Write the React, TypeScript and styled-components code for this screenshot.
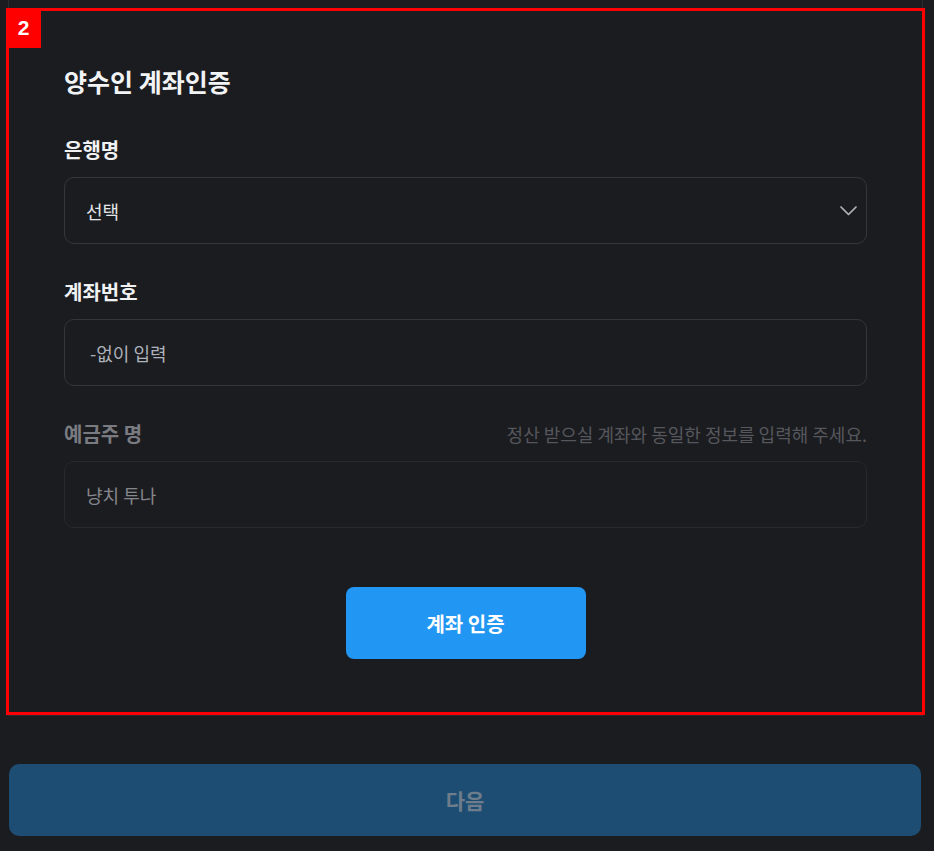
import React from "react";
import styled, { createGlobalStyle } from "styled-components";

const GlobalStyle = createGlobalStyle`
  html, body {
    margin: 0;
    padding: 0;
    background: #1b1c20;
  }
  body {
    font-family: "Noto Sans CJK KR", "Noto Sans", sans-serif;
    -webkit-font-smoothing: antialiased;
  }
  * { box-sizing: border-box; }
`;

const Page = styled.div`
  position: relative;
  width: 934px;
  height: 851px;
  overflow: hidden;
  background: #1b1c20;
  display: flex;
  flex-direction: column;
`;

const Card = styled.section`
  margin: 0 11px 0 8px;
  padding: 66px 55px 55px 55px;
  border: 1px solid #2b2c31;
  border-top: none;
  border-bottom: 2px solid #2a2b30;
  background: #1b1c20;
  display: flex;
  flex-direction: column;
`;

const Title = styled.h2`
  margin: 0 0 41px 0;
  font-size: 25px;
  line-height: 30px;
  font-weight: 700;
  color: #f2f3f5;
`;

const Field = styled.div`
  display: flex;
  flex-direction: column;
  gap: 14px;
  margin-bottom: 35px;
`;

const LabelRow = styled.div`
  display: flex;
  align-items: center;
  justify-content: space-between;
  height: 26px;
`;

const Label = styled.label<{ $muted?: boolean }>`
  font-size: 20px;
  line-height: 26px;
  font-weight: 700;
  color: ${(p) => (p.$muted ? "#7a7b80" : "#f0f1f3")};
`;

const Hint = styled.span`
  font-size: 18px;
  line-height: 26px;
  color: #56575c;
`;

const Box = styled.div<{ $disabled?: boolean }>`
  height: 67px;
  border: 1px solid ${(p) => (p.$disabled ? "#28292e" : "#35363b")};
  border-radius: 10px;
  display: flex;
  align-items: center;
  justify-content: space-between;
  padding: 0 7px 0 21px;
  background: #1b1c20;
`;

const BoxText = styled.span<{ $tone: "value" | "placeholder" | "disabled" }>`
  font-size: 18px;
  color: ${(p) =>
    p.$tone === "value" ? "#e4e5e8" : p.$tone === "placeholder" ? "#aeb2ba" : "#86878c"};
`;

const Actions = styled.div`
  display: flex;
  justify-content: center;
  margin-top: 24px;
`;

const PrimaryButton = styled.button`
  width: 240px;
  height: 72px;
  border: none;
  border-radius: 8px;
  background: #2196f3;
  color: #ffffff;
  font-family: inherit;
  font-size: 20px;
  font-weight: 700;
`;

const NextButton = styled.button`
  margin: 48px 13px 0 9px;
  height: 72px;
  border: none;
  border-radius: 10px;
  background: #1e4d73;
  color: #6d7d8b;
  font-family: inherit;
  font-size: 21px;
  font-weight: 700;
`;

const Annotation = styled.div`
  position: absolute;
  left: 6px;
  top: 8px;
  width: 919px;
  height: 707px;
  border: 3px solid #ff0000;
  pointer-events: none;
`;

const Badge = styled.div`
  position: absolute;
  left: 6px;
  top: 8px;
  width: 35px;
  height: 40px;
  background: #ff0000;
  color: #ffffff;
  font-family: "Liberation Sans", Arial, sans-serif;
  font-weight: 700;
  font-size: 21px;
  display: flex;
  align-items: center;
  justify-content: center;
`;

const Chevron = () => (
  <svg width="20" height="20" viewBox="0 0 20 20" fill="none">
    <polyline
      points="2,6 9.5,13.5 17,6"
      stroke="#b4b5b9"
      strokeWidth="1.7"
      strokeLinecap="round"
      strokeLinejoin="round"
    />
  </svg>
);

export default function App() {
  return (
    <>
      <GlobalStyle />
      <Page>
        <Card>
          <Title>양수인 계좌인증</Title>
          <Field>
            <LabelRow>
              <Label>은행명</Label>
            </LabelRow>
            <Box>
              <BoxText $tone="value">선택</BoxText>
              <Chevron />
            </Box>
          </Field>
          <Field>
            <LabelRow>
              <Label>계좌번호</Label>
            </LabelRow>
            <Box>
              <BoxText $tone="placeholder">&nbsp;-없이 입력</BoxText>
            </Box>
          </Field>
          <Field>
            <LabelRow>
              <Label $muted>예금주 명</Label>
              <Hint>정산 받으실 계좌와 동일한 정보를 입력해 주세요.</Hint>
            </LabelRow>
            <Box $disabled>
              <BoxText $tone="disabled">냥치 투나</BoxText>
            </Box>
          </Field>
          <Actions>
            <PrimaryButton>계좌 인증</PrimaryButton>
          </Actions>
        </Card>
        <NextButton>다음</NextButton>
        <Annotation />
        <Badge>2</Badge>
      </Page>
    </>
  );
}
